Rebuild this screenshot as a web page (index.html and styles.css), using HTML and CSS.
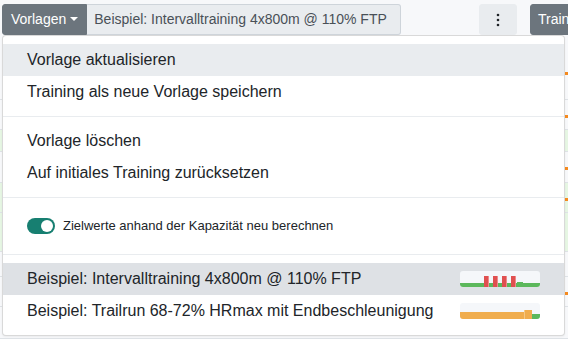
FILE: index.html
```html
<!DOCTYPE html>
<html lang="de">
<head>
<meta charset="utf-8">
<title>Vorlagen</title>
<link rel="stylesheet" href="styles.css">
</head>
<body>
<div class="page">
  <div class="toolbar">
    <div class="input-group">
      <button class="btn btn-secondary dropdown-toggle">Vorlagen<span class="caret"></span></button>
      <span class="group-text">Beispiel: Intervalltraining 4x800m @ 110% FTP</span>
    </div>
    <button class="btn btn-light more" aria-label="Mehr">
      <svg width="4" height="14" viewBox="0 0 4 14"><circle cx="2" cy="2" r="1.3" fill="#212529"/><circle cx="2" cy="7" r="1.3" fill="#212529"/><circle cx="2" cy="12" r="1.3" fill="#212529"/></svg>
    </button>
    <button class="btn btn-secondary train">Training starten</button>
  </div>

  <div class="table">
    <div class="trow h56"><span class="dot"></span></div>
    <div class="trow h30"><span class="dot"></span></div>
    <div class="trow h22 green"></div>
    <div class="trow h31"><span class="dot"></span></div>
    <div class="trow h30 green"><span class="dot"></span></div>
    <div class="trow h39 green"></div>
    <div class="trow h25"></div>
    <div class="trow h30"><span class="dot"></span></div>
    <div class="trow h32"></div>
  </div>

  <div class="dropdown-menu">
    <a class="dropdown-item hover">Vorlage aktualisieren</a>
    <a class="dropdown-item">Training als neue Vorlage speichern</a>
    <div class="divider"></div>
    <a class="dropdown-item">Vorlage löschen</a>
    <a class="dropdown-item">Auf initiales Training zurücksetzen</a>
    <div class="divider"></div>
    <div class="switch-row">
      <span class="switch"><span class="knob"></span></span>
      <span class="switch-label">Zielwerte anhand der Kapazität neu berechnen</span>
    </div>
    <div class="divider"></div>
    <a class="dropdown-item template active">
      <span>Beispiel: Intervalltraining 4x800m @ 110% FTP</span>
      <svg class="thumb" width="80" height="16" viewBox="0 0 80 16">
        <defs><clipPath id="c1"><rect width="80" height="16" rx="3"/></clipPath></defs>
        <g clip-path="url(#c1)">
          <rect width="80" height="16" fill="#f5f7fa"/>
          <rect x="0" y="12" width="80" height="4" fill="#5cb85c"/>
          <rect x="57" y="11" width="6" height="5" fill="#5cb85c"/>
          <rect x="24" y="5" width="4" height="11" fill="#e05050"/>
          <rect x="28" y="5" width="1" height="11" fill="#ee8a8a"/>
          <rect x="33" y="5" width="4" height="11" fill="#e05050"/>
          <rect x="37" y="5" width="1" height="11" fill="#ee8a8a"/>
          <rect x="42" y="5" width="4" height="11" fill="#e05050"/>
          <rect x="46" y="5" width="1" height="11" fill="#ee8a8a"/>
          <rect x="51" y="5" width="4" height="11" fill="#e05050"/>
          <rect x="55" y="5" width="1" height="11" fill="#ee8a8a"/>
        </g>
      </svg>
    </a>
    <a class="dropdown-item template">
      <span>Beispiel: Trailrun 68-72% HRmax mit Endbeschleunigung</span>
      <svg class="thumb" width="80" height="16" viewBox="0 0 80 16">
        <defs><clipPath id="c2"><rect width="80" height="16" rx="3"/></clipPath></defs>
        <g clip-path="url(#c2)">
          <rect width="80" height="16" fill="#f5f7fa"/>
          <rect x="0" y="9" width="64" height="7" fill="#f0ad4e"/>
          <rect x="64" y="7" width="8" height="9" fill="#f0ad4e"/>
          <rect x="64" y="7" width="1" height="9" fill="#f5c885"/>
          <rect x="72" y="11" width="8" height="5" fill="#5cb85c"/>
        </g>
      </svg>
    </a>
  </div>
</div>
</body>
</html>
```
FILE: styles.css
```css
* { box-sizing: border-box; }
html, body { margin: 0; padding: 0; }
body {
  width: 568px;
  height: 339px;
  overflow: hidden;
  background: #f7f8fa;
  font-family: "Liberation Sans", Arial, sans-serif;
  color: #212529;
}
.page { position: relative; width: 568px; height: 339px; overflow: hidden; }

.toolbar {
  display: flex;
  align-items: stretch;
  padding: 4px 0 0 2px;
  height: 35px;
  white-space: nowrap;
}
.input-group { display: flex; width: 399px; flex-shrink: 0; }
.btn {
  font-family: inherit;
  font-size: 14px;
  line-height: 21px;
  padding: 4px 8px;
  border: 1px solid transparent;
  border-radius: 3px;
  cursor: pointer;
  flex-shrink: 0;
}
.btn-secondary { background: #6c757d; border-color: #6c757d; color: #fff; }
.btn-light { background: #e9ecef; border-color: #e9ecef; color: #212529; }
.dropdown-toggle { border-radius: 3px 0 0 3px; display: flex; align-items: center; }
.caret {
  display: inline-block;
  margin-left: 4px;
  border-top: 4.5px solid #fff;
  border-left: 4.5px solid transparent;
  border-right: 4.5px solid transparent;
  margin-top: -1px;
}
.group-text {
  flex: 1;
  display: flex;
  align-items: center;
  padding: 4px 7px;
  font-size: 14px;
  line-height: 21px;
  color: #495057;
  background: #e9ecef;
  border: 1px solid #ced4da;
  border-left: 0;
  border-radius: 0 3px 3px 0;
}
.more {
  margin-left: 78px;
  width: 38px;
  display: flex;
  align-items: center;
  justify-content: center;
}
.train { margin-left: 13px; padding-left: 7px; }

/* background table, mostly hidden by the menu */
.table { margin-top: 9px; }
.trow { position: relative; border-bottom: 1px solid #dee2e6; }
.trow.green { background: #e6f6e3; }
.h56 { height: 56px; }
.h30 { height: 30px; }
.h22 { height: 22px; }
.h31 { height: 31px; }
.h39 { height: 39px; }
.h25 { height: 25px; }
.h32 { height: 32px; }
.dot {
  position: absolute;
  right: 0;
  top: 50%;
  width: 3px;
  height: 3px;
  background: #f58a1f;
}

.dropdown-menu {
  position: absolute;
  left: 2px;
  top: 35px;
  width: 563px;
  padding: 8px 0;
  background: #fff;
  border: 1px solid rgba(0, 0, 0, 0.15);
  border-radius: 4px;
  box-shadow: 0 1px 2px rgba(0,0,0,0.05);
}
.dropdown-item {
  display: block;
  padding: 4px 24px;
  font-size: 16px;
  line-height: 24px;
  color: #212529;
  white-space: nowrap;
}
.dropdown-item.hover { background: #e9ecef; }
.dropdown-item.active { background: #dee1e5; }
.template { display: flex; align-items: center; justify-content: space-between; }
.thumb { display: block; flex-shrink: 0; }
.divider { height: 0; margin: 8px 0; border-top: 1px solid #e9ecef; }

.switch-row {
  display: flex;
  align-items: center;
  height: 40px;
  padding: 0 24px;
}
.switch {
  position: relative;
  width: 28px;
  height: 16px;
  border-radius: 8px;
  background: #177f71;
  flex-shrink: 0;
}
.knob {
  position: absolute;
  right: 2px;
  top: 2px;
  width: 12px;
  height: 12px;
  border-radius: 50%;
  background: #fff;
}
.switch-label {
  margin-left: 8px;
  font-size: 13px;
  line-height: 18px;
  color: #212529;
}
```
